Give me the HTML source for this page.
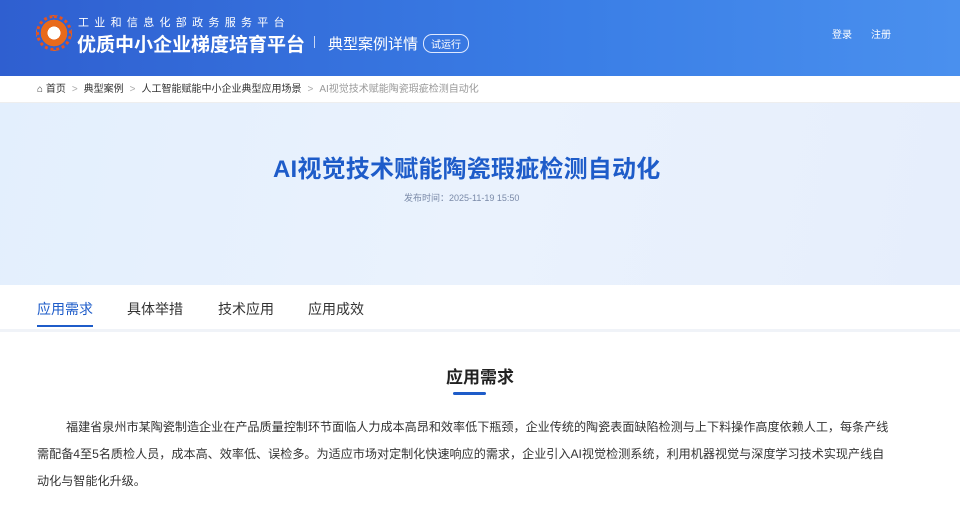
<!DOCTYPE html>
<html><head><meta charset="utf-8"><style>
*{margin:0;padding:0;box-sizing:border-box}
body{width:960px;height:513px;overflow:hidden;background:#fff;font-family:"Liberation Sans","Noto Sans CJK SC",sans-serif;color:#333}
.hdr{height:76px;background:linear-gradient(90deg,#2f5fd0,#3a7ee6 60%,#4a90ee);position:relative;color:#fff}
.logo{position:absolute;left:36px;top:15px;width:36px;height:36px;border-radius:50%;background:radial-gradient(circle,#fff 0 30%,#e86a1c 31% 62%,#fff0 63%);border:3px dotted #e8531c}
.t1{position:absolute;left:78px;top:14px;font-size:11px;letter-spacing:5.3px}
.t2{position:absolute;left:77px;top:30px;font-size:19px;font-weight:bold}
.sep{position:absolute;left:314px;top:36px;width:1px;height:12px;background:#c9d8f5}
.t3{position:absolute;left:328px;top:33px;font-size:15px}
.tag{position:absolute;left:423px;top:34px;font-size:10px;border:1px solid #dfe9ff;border-radius:9px;padding:1px 7px}
.nav{position:absolute;top:26px;font-size:10px}
.bc{height:27px;font-size:10px;padding:0 0 0 37px;line-height:27px;color:#333;border-bottom:1px solid #eee}
.bc span{color:#999}.bc i{font-style:normal;color:#aaa;margin:0 6px}
.ban{height:182px;background:linear-gradient(100deg,#e3effd,#eaf2fd 50%,#e6eefc);position:relative;text-align:center}
.ban h1{position:absolute;left:273px;top:46px;font-size:24px;color:#1e5cc9;letter-spacing:0.2px}
.ban p{position:absolute;left:404px;top:191px;font-size:9px;color:#7a8aa8}
.tabs{height:47px;border-bottom:3px solid #f0f3f8;position:relative;font-size:14px}
.tabs div{position:absolute;top:14px}
.on{color:#1e5cc9}
.on:after{content:"";position:absolute;left:0;right:0;top:26px;height:2px;background:#1e5cc9}
h2{position:absolute;left:0;width:960px;text-align:center;top:363px;font-size:17px;color:#222}
.bar{position:absolute;left:453px;top:392px;width:33px;height:3px;background:#1e5cc9;border-radius:2px}
.txt{position:absolute;left:37px;top:414px;width:860px;font-size:12.1px;line-height:27px;text-indent:29px;color:#333}
</style></head><body>
<div class="hdr"><div class="logo"></div>
<div class="t1">工业和信息化部政务服务平台</div>
<div class="t2">优质中小企业梯度培育平台</div>
<div class="sep"></div><div class="t3">典型案例详情</div><div class="tag">试运行</div>
<div class="nav" style="left:832px">登录</div><div class="nav" style="left:871px">注册</div></div>
<div class="bc">⌂ 首页<i>&gt;</i>典型案例<i>&gt;</i>人工智能赋能中小企业典型应用场景<i>&gt;</i><span>AI视觉技术赋能陶瓷瑕疵检测自动化</span></div>
<div class="ban"><h1>AI视觉技术赋能陶瓷瑕疵检测自动化</h1><p style="top:88px">发布时间：2025-11-19 15:50</p></div>
<div class="tabs"><div class="on" style="left:37px">应用需求</div><div style="left:127px">具体举措</div><div style="left:218px">技术应用</div><div style="left:308px">应用成效</div></div>
<h2>应用需求</h2><div class="bar"></div>
<div class="txt">福建省泉州市某陶瓷制造企业在产品质量控制环节面临人力成本高昂和效率低下瓶颈，企业传统的陶瓷表面缺陷检测与上下料操作高度依赖人工，每条产线<br>需配备4至5名质检人员，成本高、效率低、误检多。为适应市场对定制化快速响应的需求，企业引入AI视觉检测系统，利用机器视觉与深度学习技术实现产线自<br>动化与智能化升级。</div>
</body></html>
